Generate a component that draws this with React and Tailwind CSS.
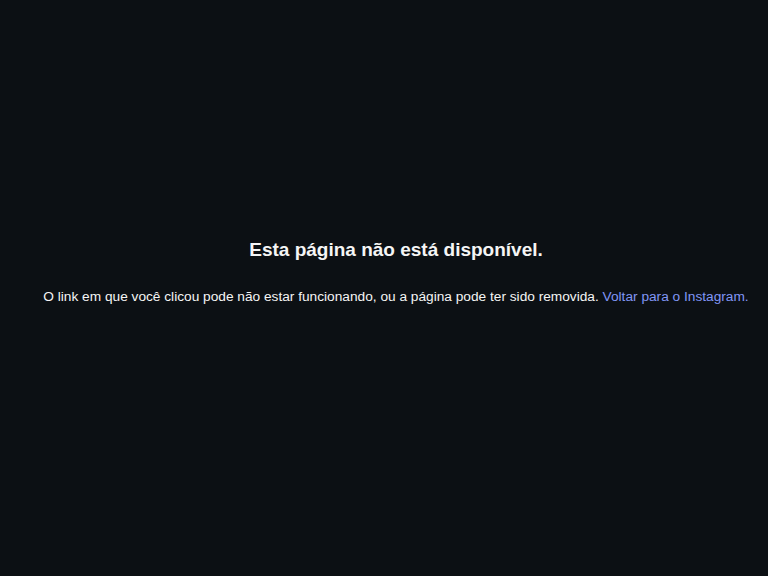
export default function App() {
  return (
    <div className="min-h-screen bg-[#0c1014] text-[#f5f5f5] font-['Liberation_Sans',Arial,sans-serif]">
      <div className="flex flex-col items-center pt-[238px] pl-[24px] text-center">
        <h2 className="text-[19px] leading-[24px] font-semibold">
          Esta página não está disponível.
        </h2>
        <div className="mt-[26px] text-[13.7px] leading-[18px]">
          O link em que você clicou pode não estar funcionando, ou a página pode ter sido removida.{" "}
          <a href="#" className="text-[#8196f5]">
            Voltar para o Instagram.
          </a>
        </div>
      </div>
    </div>
  );
}
